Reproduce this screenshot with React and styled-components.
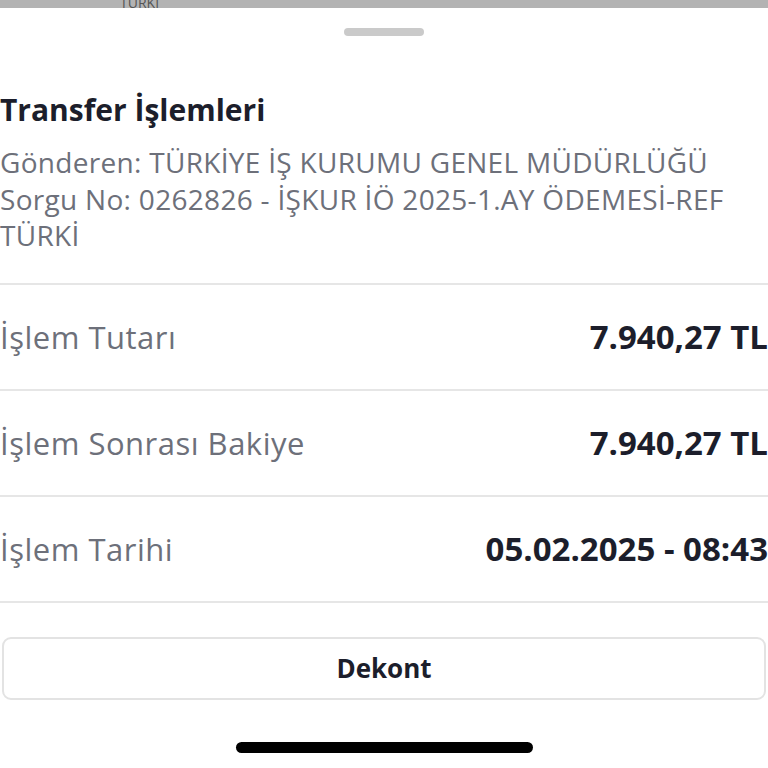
import React from "react";
import styled, { createGlobalStyle } from "styled-components";

const Global = createGlobalStyle`
  html, body { margin: 0; padding: 0; background: #ffffff; }
  body { font-family: "Open Sans", "Noto Sans", sans-serif; overflow: hidden; }
  * { box-sizing: border-box; }
`;

const Page = styled.div`
  width: 768px;
  height: 768px;
  display: flex;
  flex-direction: column;
  background: #ffffff;
  overflow: hidden;
`;

const Backdrop = styled.div`
  height: 8px;
  background: #b3b3b3;
  overflow: hidden;
  padding-left: 120px;
  color: #555;
  font-size: 14px;
  line-height: 6px;
`;

const Sheet = styled.div`
  flex: 1;
  display: flex;
  flex-direction: column;
  background: #ffffff;
`;

const HandleWrap = styled.div`
  display: flex;
  justify-content: center;
  padding-top: 20px;
`;

const Handle = styled.div`
  width: 80px;
  height: 8px;
  border-radius: 4px;
  background: #cacaca;
`;

const Header = styled.div`
  padding-top: 56px;
  display: flex;
  flex-direction: column;
`;

const Title = styled.h1`
  margin: 0;
  font-size: 30px;
  font-weight: 700;
  color: #1c1e2b;
  line-height: 36px;
`;

const Desc = styled.p`
  margin: 16px 0 0;
  font-size: 28px;
  letter-spacing: 0.3px;
  line-height: 36.5px;
  color: #6d707a;
  font-weight: 400;
  white-space: nowrap;
`;

const List = styled.div`
  margin-top: 29px;
  border-top: 2px solid #e6e6e6;
`;

const Row = styled.div`
  height: 106px;
  display: flex;
  align-items: center;
  justify-content: space-between;
  border-bottom: 2px solid #e6e6e6;
`;

const Label = styled.span`
  font-size: 31px;
  letter-spacing: 0.5px;
  color: #6d707a;
`;

const Value = styled.span`
  font-size: 33px;
  font-weight: 700;
  color: #1c1e2b;
  white-space: nowrap;
`;

const ButtonWrap = styled.div`
  padding: 34px 2px 0;
`;

const Button = styled.button`
  width: 100%;
  height: 63px;
  border: 2px solid #e3e3e3;
  border-radius: 9px;
  background: #ffffff;
  font-family: inherit;
  font-size: 26px;
  font-weight: 700;
  color: #1c1e2b;
`;

const Indicator = styled.div`
  margin: 42px auto 0;
  width: 297px;
  height: 11px;
  border-radius: 6px;
  background: #000000;
`;

const rows = [
  ["İşlem Tutarı", "7.940,27 TL"],
  ["İşlem Sonrası Bakiye", "7.940,27 TL"],
  ["İşlem Tarihi", "05.02.2025 - 08:43"],
];

export default function App() {
  return (
    <>
      <Global />
      <Page>
        <Backdrop>TÜRKİ</Backdrop>
        <Sheet>
          <HandleWrap>
            <Handle />
          </HandleWrap>
          <Header>
            <Title>Transfer İşlemleri</Title>
            <Desc>
              Gönderen: TÜRKİYE İŞ KURUMU GENEL MÜDÜRLÜĞÜ
              <br />
              Sorgu No: 0262826 - İŞKUR İÖ 2025-1.AY ÖDEMESİ-REF
              <br />
              TÜRKİ
            </Desc>
          </Header>
          <List>
            {rows.map(([l, v]) => (
              <Row key={l}>
                <Label>{l}</Label>
                <Value>{v}</Value>
              </Row>
            ))}
          </List>
          <ButtonWrap>
            <Button>Dekont</Button>
          </ButtonWrap>
          <Indicator />
        </Sheet>
      </Page>
    </>
  );
}
